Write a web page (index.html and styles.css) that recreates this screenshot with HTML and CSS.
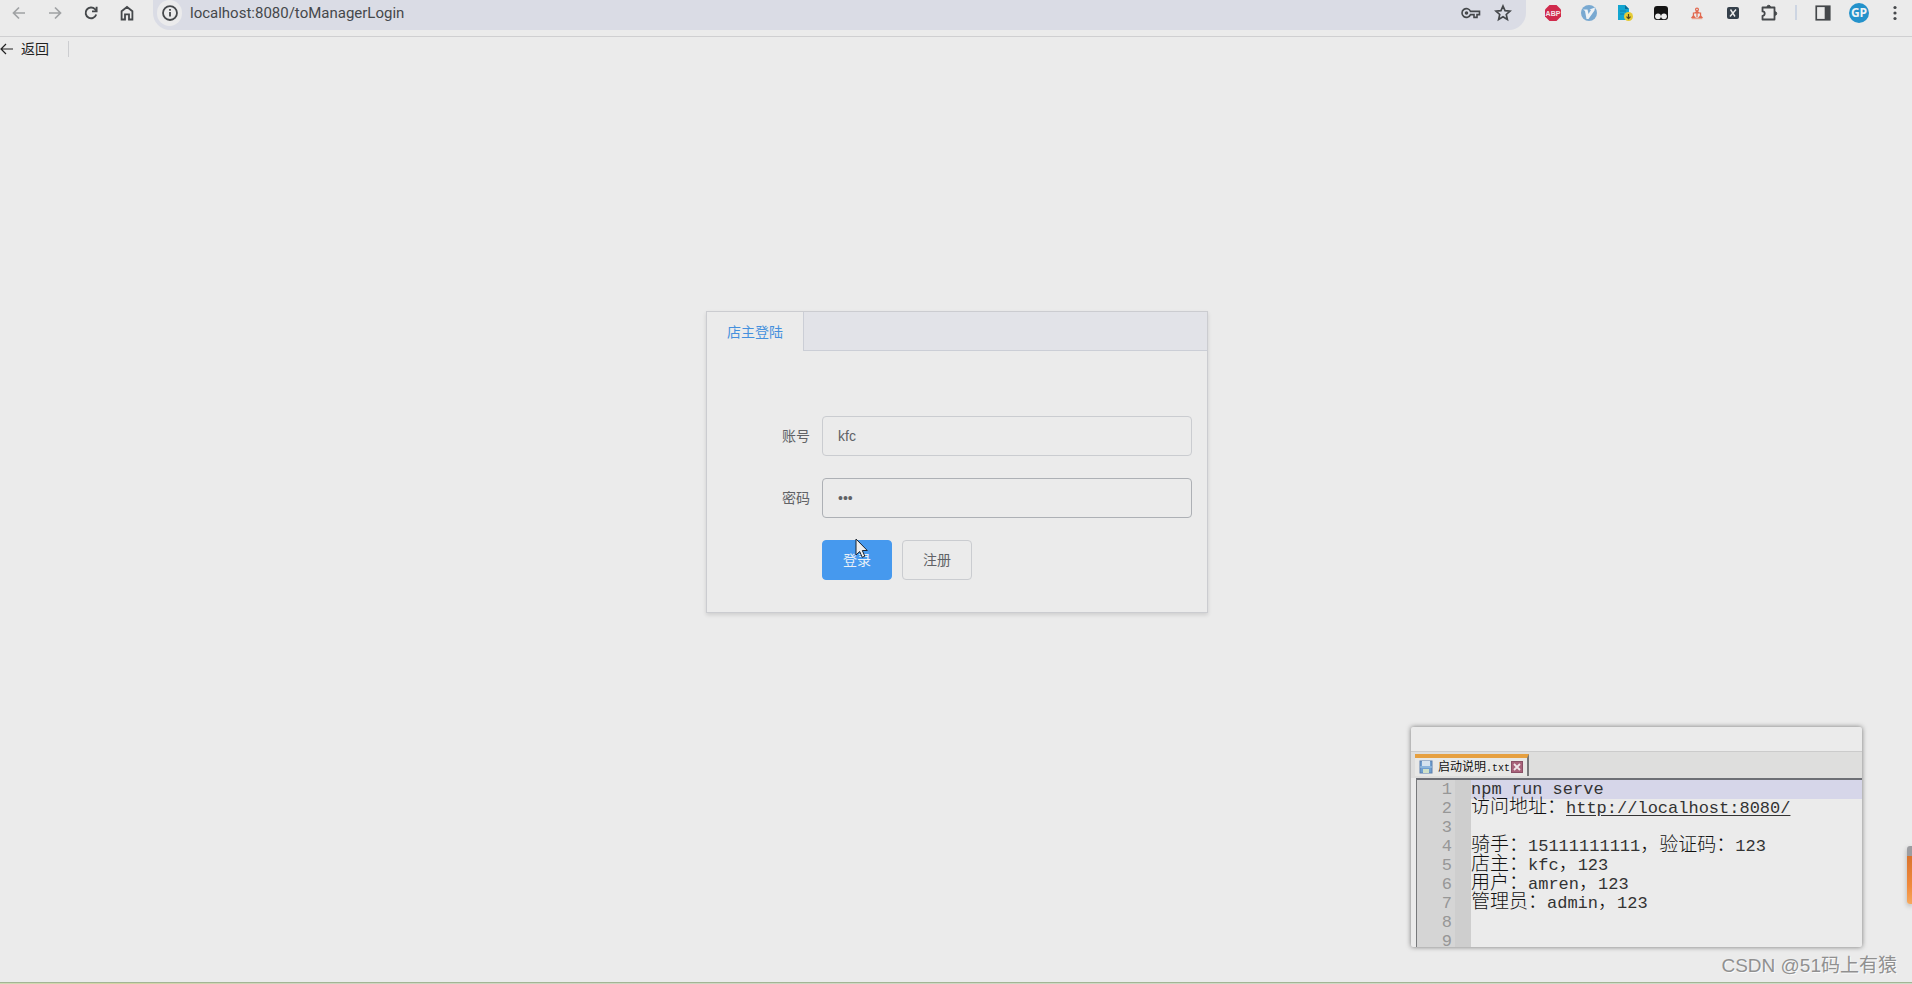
FILE: index.html
```
<!DOCTYPE html>
<html lang="zh-CN">
<head>
<meta charset="utf-8">
<title>店主登陆</title>
<link rel="stylesheet" href="styles.css">
</head>
<body>
<header class="toolbar">
  <nav class="nav-buttons">
    <button class="icon-btn muted" aria-label="后退"><svg width="16" height="16" viewBox="0 0 16 16" fill="none" stroke="currentColor" stroke-width="1.7"><path d="M14 8H3M8 2.5 2.5 8 8 13.5"/></svg></button>
    <button class="icon-btn muted" aria-label="前进"><svg width="16" height="16" viewBox="0 0 16 16" fill="none" stroke="currentColor" stroke-width="1.7"><path d="M2 8h11M8 2.5 13.5 8 8 13.5"/></svg></button>
    <button class="icon-btn" aria-label="刷新"><svg width="16" height="16" viewBox="0 0 16 16" fill="none" stroke="currentColor" stroke-width="1.9"><path d="M13.2 9.5A5.4 5.4 0 1 1 12 4.2l1.2 1.3"/><path d="M13.6 1.8v4.6H9"/></svg></button>
    <button class="icon-btn" aria-label="主页"><svg width="16" height="16" viewBox="0 0 16 16" fill="none" stroke="currentColor" stroke-width="1.8"><path d="M2.6 6.3 8 2l5.4 4.3v8.2H10V9.3H6v5.2H2.6z"/></svg></button>
  </nav>
  <div class="omnibox">
    <span class="site-info"><svg width="18" height="18" viewBox="0 0 16 16" fill="none" stroke="currentColor" stroke-width="1.6"><circle cx="8" cy="8" r="6.2"/><path d="M8 7.2v4M8 4.4v1.7"/></svg></span>
    <input class="url" type="text" aria-label="地址" value="localhost:8080/toManagerLogin">
    <button class="icon-btn key" aria-label="密码"><svg width="20" height="14" viewBox="0 0 20 14" fill="none" stroke="currentColor" stroke-width="1.6"><path d="M9.5 5.4A4.4 4.4 0 1 0 9.5 8.6H13v2.8h3V8.6h2.5V5.4z"/><circle cx="5.5" cy="7" r="1" fill="currentColor"/></svg></button>
    <button class="icon-btn" aria-label="收藏"><svg width="18" height="18" viewBox="0 0 16 16" fill="none" stroke="currentColor" stroke-width="1.5"><path d="m8 1.8 1.8 4.1 4.5.4-3.4 3 1 4.4L8 11.4l-3.900 2.300 1-4.400-3.400-3 4.500-.4z"/></svg></button>
  </div>
  <div class="extensions">
    <button class="icon-btn" aria-label="ABP"><svg width="18" height="18" viewBox="0 0 18 18"><path d="M5.500 1h7L17 5.500v7L12.500 17h-7L1 12.500v-7z" fill="#d02a4c"/><text x="9" y="12" class="abp">ABP</text></svg></button>
    <button class="icon-btn" aria-label="V"><svg width="18" height="18" viewBox="0 0 18 18"><circle cx="9" cy="9" r="8" fill="#79a9d1"/><path d="M3 5.500h4.500l1 4.500L11 6l-1.500-.5L15 3.500l-.5 3L8.500 15h-2L5 7z" fill="#eef2f5"/></svg></button>
    <button class="icon-btn" aria-label="文档下载"><svg width="18" height="18" viewBox="0 0 18 18"><path d="M2 1h7l4 4v11H2z" fill="#12a5d0"/><path d="M9 1v4h4z" fill="#0b6f99"/><path d="M4 7h6M4 10h4" stroke="#0b7fae"/><circle cx="12.500" cy="12.500" r="4.500" fill="#e5cb35"/><path d="M12.500 10v4.500M10.500 12.700l2 2 2-2" stroke="#4a4420" stroke-width="1.200" fill="none"/></svg></button>
    <button class="icon-btn" aria-label="脚本"><svg width="18" height="18" viewBox="0 0 18 18"><rect x="2" y="2" width="14" height="14" rx="3" fill="#141414"/><circle cx="6" cy="12.300" r="2.900" fill="#eee"/><circle cx="12" cy="12.300" r="2.900" fill="#eee"/></svg></button>
    <button class="icon-btn" aria-label="结构"><svg width="16" height="16" viewBox="0 0 18 18" fill="none" stroke="#e2694f" stroke-width="1.400"><circle cx="9" cy="5" r="1.600"/><path d="M9 6.600v7.400M5 12V9h8v3M6.500 9 9 7l2.500 2"/><path d="m3.500 14 1.500-2 1.500 2zM11.500 14l1.500-2 1.500 2z"/><path d="M3 15.300h12" stroke="#e8a48f"/></svg></button>
    <button class="icon-btn" aria-label="X"><svg width="18" height="18" viewBox="0 0 18 18"><rect x="3" y="3" width="12" height="12" rx="2" fill="#35404b"/><path d="m6.500 5.500 4.500 7M12 5.500l-6 7" stroke="#eee" stroke-width="1.400"/></svg></button>
    <button class="icon-btn" aria-label="扩展程序"><svg width="18" height="18" viewBox="0 0 18 18" fill="none" stroke="currentColor" stroke-width="1.800" stroke-linejoin="round"><path d="M2.500 3.500h12v12h-12v-3.700a2.200 2.200 0 0 0 0-4.400z"/><path d="M7 3a1.700 1.700 0 0 1 3.400 0zM15 7.800a1.700 1.700 0 0 1 0 3.400z" fill="currentColor" stroke-width="1"/></svg></button>
  </div>
  <span class="toolbar-divider"></span>
  <div class="browser-menu">
    <button class="icon-btn" aria-label="侧边栏"><svg width="18" height="18" viewBox="0 0 16 16"><rect x="2" y="2" width="12" height="12" fill="none" stroke="currentColor" stroke-width="1.500"/><path d="M9.500 2H14v12H9.500z" fill="currentColor"/></svg></button>
    <button class="avatar">GP</button>
    <button class="icon-btn" aria-label="菜单"><svg width="16" height="16" viewBox="0 0 16 16" fill="currentColor"><circle cx="8" cy="2.500" r="1.600"/><circle cx="8" cy="8" r="1.600"/><circle cx="8" cy="13.500" r="1.600"/></svg></button>
  </div>
</header>
<main class="page">
  <div class="page-header">
    <button class="back"><svg width="14" height="14" viewBox="0 0 14 14" fill="none" stroke="currentColor" stroke-width="1.200"><path d="M13 7H1M6 2 1 7l5 5"/></svg>返回</button>
  </div>
  <section class="card">
    <div class="tabs" role="tablist"><button class="tab" role="tab" aria-selected="true">店主登陆</button></div>
    <form class="form">
      <div class="row"><label for="account">账号</label><input id="account" class="field" type="text" value="kfc"></div>
      <div class="row"><label for="password">密码</label><input id="password" class="field hover" type="password" value="123"></div>
      <div class="row actions">
        <button type="button" class="btn primary">登录<svg class="cursor" width="14" height="21" viewBox="0 0 14 21"><path d="M1 1v16l3.700-3.500 2.500 5.800 2.600-1.100-2.500-5.700h5z" fill="#eee" stroke="#1b2430"/></svg></button>
        <button type="button" class="btn">注册</button>
      </div>
    </form>
  </section>
</main>
<aside class="editor">
  <div class="editor-title"></div>
  <div class="editor-tabs">
    <div class="file-tab">
      <svg width="14" height="14" viewBox="0 0 14 14"><rect x="1" y="1" width="12" height="12" fill="#6f9fd0" stroke="#5b7fae"/><path d="M3 1h8v5H3z" fill="#d5e3ef"/><path d="M1 7h12" stroke="#a9cbe8"/><path d="M4 9h6v4H4z" fill="#cfe0c8"/></svg>
      <span class="file-name">启动说明<span class="ext">.txt</span></span>
      <button class="close" aria-label="关闭"><svg width="12" height="12" viewBox="0 0 12 12"><rect x=".5" y=".5" width="11" height="11" fill="#a8627a" stroke="#8a5066"/><path d="m3 3 6 6M9 3 3 9" stroke="#f0e6ea" stroke-width="1.800"/></svg></button>
    </div>
  </div>
  <ol class="code">
    <li class="current"><span class="text">npm run serve</span></li>
    <li><span class="text"><span class="zh">访问地址：</span><a href="http://localhost:8080/">http://localhost:8080/</a></span></li>
    <li><span class="text"></span></li>
    <li><span class="text"><span class="zh">骑手：</span>15111111111<span class="zh">，验证码：</span>123</span></li>
    <li><span class="text"><span class="zh">店主：</span>kfc<span class="zh">，</span>123</span></li>
    <li><span class="text"><span class="zh">用户：</span>amren<span class="zh">，</span>123</span></li>
    <li><span class="text"><span class="zh">管理员：</span>admin<span class="zh">，</span>123</span></li>
    <li><span class="text"></span></li>
    <li><span class="text"></span></li>
  </ol>
</aside>
<div class="side-widget"></div>
<div class="watermark">CSDN @51码上有猿</div>
<div class="bottom-line"></div>
</body>
</html>
```
FILE: styles.css
```
*, *::before { box-sizing: border-box; }
body {
  margin: 0;
  min-height: 100vh;
  position: relative;
  overflow: hidden;
  background: #ebebeb;
  color: #606266;
  font: 14px/20px "Liberation Sans", "Noto Sans CJK SC", sans-serif;
}
button { margin: 0; padding: 0; border: 0; background: none; color: inherit; font: inherit; }
svg { display: block; }

.toolbar {
  display: flex;
  align-items: flex-start;
  height: 37px;
  padding-right: 7px;
  border-bottom: 1px solid #cfcfd1;
  color: #45484b;
}
.icon-btn { display: flex; align-items: center; justify-content: center; width: 20px; height: 26px; }
.icon-btn.muted { color: #a0a2a4; }
.nav-buttons { display: flex; gap: 16px; padding: 0 16px 0 9px; }
.omnibox {
  flex: 1;
  display: flex;
  gap: 12px;
  height: 30px;
  padding: 0 13px 0 4px;
  border-radius: 0 0 17px 17px;
  background: #dadce5;
}
.site-info {
  display: flex;
  align-items: center;
  justify-content: center;
  width: 25px;
  height: 26px;
  border-radius: 13px;
  background: #ebebec;
}
.url {
  flex: 1;
  min-width: 0;
  height: 26px;
  margin-left: -4px;
  padding: 0;
  border: 0;
  background: none;
  color: #45484b;
  font: 15px/26px Roboto, "Noto Sans", sans-serif;
}
.extensions { display: flex; gap: 16px; padding: 0 16px 0 17px; }
.abp { font: bold 7px "Liberation Sans", sans-serif; fill: #f3e6e9; text-anchor: middle; }
.toolbar-divider { width: 2px; height: 15px; margin: 5px 16px 0 0; background: #cdd5e2; }
.browser-menu { display: flex; gap: 16px; }
.avatar {
  width: 20px;
  height: 20px;
  margin-top: 3px;
  border-radius: 10px;
  background: #2492cb;
  color: #eef3f6;
  font: bold 12px/20px "Open Sans", sans-serif;
}

.page { display: flex; flex-direction: column; align-items: center; }
.page-header { align-self: stretch; display: flex; padding-top: 4px; }
.back {
  display: flex;
  align-items: center;
  gap: 7px;
  height: 16px;
  padding-right: 19px;
  border-right: 1px solid #cccdd0;
  color: #222;
}
.card {
  width: 502px;
  margin: 254px 0 0 2px;
  border: 1px solid #cbccd0;
  box-shadow: 0 2px 4px rgba(0, 0, 0, .12);
}
.tabs { display: flex; height: 39px; border-bottom: 1px solid #cbced6; background: #e2e3e8; }
.tab {
  height: 39px;
  padding: 0 20px;
  border-right: 1px solid #cbced6;
  background: #ebebeb;
  color: #4590dd;
}
.form { display: flex; flex-direction: column; gap: 22px; padding: 65px 15px 32px; }
.row { display: flex; align-items: center; height: 40px; }
.row label { width: 100px; padding-right: 12px; text-align: right; }
.field {
  flex: 1;
  min-width: 0;
  height: 40px;
  padding: 0 15px;
  border: 1px solid #caccd0;
  border-radius: 4px;
  background: transparent;
  color: #606266;
  font: inherit;
}
.field.hover { border-color: #adb0b5; }
.actions { gap: 10px; padding-left: 100px; }
.btn { width: 70px; height: 40px; border: 1px solid #caccd0; border-radius: 4px; }
.btn.primary { position: relative; border-color: #4699ee; background: #4699ee; color: #e8f0f8; }
.cursor { position: absolute; left: 32px; top: -3px; }

.editor {
  position: absolute;
  right: 50px;
  bottom: 37px;
  width: 451px;
  background: #ebebeb;
  border-radius: 2px;
  box-shadow: 0 0 5px rgba(0, 0, 0, .5);
  overflow: hidden;
  color: #333;
}
.editor-title { height: 25px; border-bottom: 1px solid #cbcbcb; }
.editor-tabs { height: 26px; padding: 2px 0 0 4px; background: #dededd; }
.file-tab {
  display: flex;
  align-items: center;
  width: 114px;
  height: 22px;
  padding: 0 4px;
  border-top: 4px solid #e6a040;
  border-right: 2px solid #77797b;
  background: #e8e8e6;
}
.file-name { flex: 1; padding-left: 5px; color: #111; font: 12px/18px "Noto Sans CJK SC", sans-serif; white-space: nowrap; }
.ext { font: 10px/18px "Liberation Mono", monospace; }
.code {
  height: 169px;
  margin: 0 0 0 5px;
  padding: 0;
  overflow: hidden;
  border-top: 2px solid #6d6f75;
  border-left: 1px solid #77797b;
  list-style: none;
  counter-reset: line;
  font: 17px/19px "Liberation Mono", monospace;
}
.code li { display: flex; height: 19px; counter-increment: line; }
.code li::before {
  content: counter(line);
  width: 54px;
  padding-right: 19px;
  background: linear-gradient(90deg, #d5d5d5 38px, #cecece 38px);
  color: #979797;
  text-align: right;
}
.text { flex: 1; white-space: pre; }
.current .text { background: #d6d6e9; }
.zh { color: #111; font: 300 19px/1px "Noto Sans CJK SC", sans-serif; }
.code a { color: inherit; text-underline-offset: 2px; }
.side-widget {
  position: absolute;
  right: 0;
  bottom: 80px;
  width: 5px;
  height: 58px;
  border-radius: 3px 0 0 3px;
  background: linear-gradient(#9c9da1 10px, #d9742f 10px, #f08a3c 40px, #f6a85c);
  box-shadow: 0 2px 5px rgba(0, 0, 0, .25);
}
.watermark {
  position: absolute;
  right: 15px;
  bottom: 5px;
  color: #909090;
  font: 19px/26px "Liberation Sans", "Noto Sans CJK SC", sans-serif;
  text-shadow: 1px 1px 0 #fafafa;
}
.bottom-line {
  position: absolute;
  left: 0;
  right: 0;
  bottom: 0;
  height: 2px;
  border-top: 1px solid #a3b594;
  background: linear-gradient(90deg, #cfd9b5, #d3d3a2 120px, #cfd3c0 300px, #cddbc8);
}
```
